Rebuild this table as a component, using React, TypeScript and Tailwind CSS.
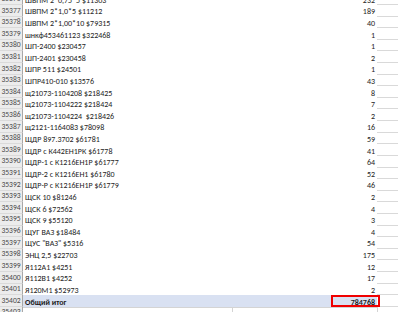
const rows: [number, string, string][] = [
  [35376, "ШВПМ 2*0,75*5 $11303", "232"],
  [35377, "ШВПМ 2*1,0*5 $11212", "189"],
  [35378, "ШВПМ 2*1,00*10 $79315", "40"],
  [35379, "шнкф453461123 $322468", "1"],
  [35380, "ШП-2400 $230457", "1"],
  [35381, "ШП-2401 $230458", "2"],
  [35382, "ШПР 511 $24501", "1"],
  [35383, "ШПР410-010 $13576", "43"],
  [35384, "щ21073-1104208 $218425", "8"],
  [35385, "щ21073-1104222 $218424", "7"],
  [35386, "щ21073-1104224  $218426", "2"],
  [35387, "щ2121-1164083 $78098", "16"],
  [35388, "ЩДР 897.3702 $61781", "59"],
  [35389, "ЩДР с К442ЕН1РК $61778", "41"],
  [35390, "ЩДР-1 с К1216ЕН1Р $61777", "64"],
  [35391, "ЩДР-2 с К1216ЕН1 $61780", "52"],
  [35392, "ЩДР-Р с К1216ЕН1Р $61779", "46"],
  [35393, "ЩСК 10 $81246", "2"],
  [35394, "ЩСК 6 $72562", "4"],
  [35395, "ЩСК 9 $55120", "3"],
  [35396, "ЩУГ ВАЗ $18484", "4"],
  [35397, "ЩУС \"ВАЗ\" $5316", "54"],
  [35398, "ЭНЦ 2,5 $22703", "175"],
  [35399, "Я112А1 $4251", "12"],
  [35400, "Я112В1 $4252", "17"],
  [35401, "Я120М1 $52973", "2"],
];

function Header({ n }: { n: number }) {
  return (
    <div className="flex items-center justify-center bg-[#ececec] border-r border-r-[#a8a8a8] border-b border-b-[#dadada] text-[#4a4a4a] text-[7.6px] leading-none overflow-hidden">
      {n}
    </div>
  );
}

export default function App() {
  return (
    <div
      className="w-[398px] h-[312px] overflow-hidden bg-white text-[8px] text-[#1c1c1c]"
      style={{ fontFamily: "Carlito, 'Liberation Sans', Arial, sans-serif" }}
    >
      <div className="-mt-[6.62px]">
        {rows.map(([n, name, qty]) => (
          <div key={n} className="grid grid-cols-[23px_210px_144px_21px] h-[11.62px]">
            <Header n={n} />
            <div className="flex items-center pl-[2px] pt-[1px] leading-none whitespace-pre">{name}</div>
            <div className="flex items-center justify-end pr-[2px] pt-[1px] leading-none">{qty}</div>
            <div className="border-b border-[#d9d9d9]" />
          </div>
        ))}

        {/* total row */}
        <div className="grid grid-cols-[23px_210px_144px_21px] h-[11.62px]">
          <Header n={35402} />
          <div className="flex items-center pl-[2px] pt-[1px] leading-none font-bold bg-[#d9e1f2]">Общий итог</div>
          <div className="relative flex items-center justify-end pr-[2px] pt-[1px] leading-none font-bold bg-[#d9e1f2]">
            784768
            <div className="absolute left-[98px] -right-[3px] -top-[0.5px] -bottom-[0.5px] border-2 border-[#f00000]" />
          </div>
          <div className="border-b border-[#d9d9d9]" />
        </div>

        <div className="grid grid-cols-[23px_210px_144px_21px] h-[11.62px]">
          <Header n={35403} />
          <div className="border-t border-r border-[#d4d4d4]" />
          <div className="border-t border-[#d4d4d4]" />
          <div className="border-l border-[#d4d4d4]" />
        </div>
      </div>
    </div>
  );
}
